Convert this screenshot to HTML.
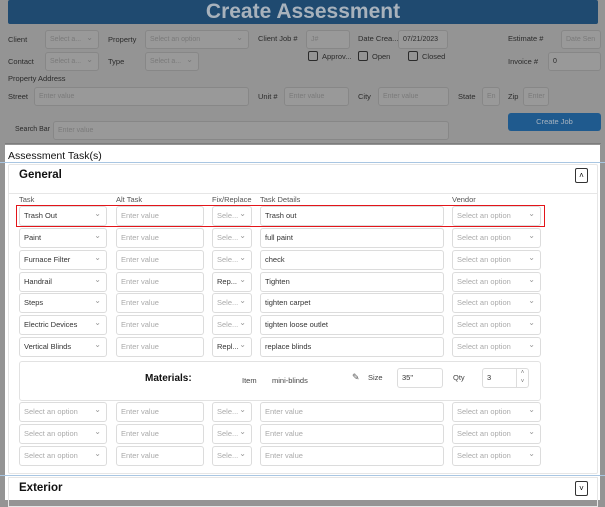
<!DOCTYPE html>
<html><head><meta charset="utf-8"><style>
*{box-sizing:border-box;margin:0;padding:0}
body{width:605px;height:500px;overflow:hidden;background:#949494;font-family:"Liberation Sans",sans-serif;position:relative}
.a{position:absolute}
.l{position:absolute;font-size:7.5px;color:#2b2b2b;white-space:nowrap}
.gi{position:absolute;height:19px;border:1px solid #878787;border-radius:3px;background:#999;font-size:7px;color:#7a7a7a;padding:0 4px;line-height:17px;white-space:nowrap;overflow:hidden}
.gi.v{color:#2b2b2b}
.gi.s:after{content:"⌄";position:absolute;right:5px;top:-2px;font-size:8px;color:#777}
.in{position:absolute;height:20px;border:1px solid #dcdcdc;border-radius:3px;background:#fff;font-size:7.5px;color:#aaa;padding:0 4px;line-height:18px;white-space:nowrap;overflow:hidden}
.in.v{color:#333}
.in.s:after{content:"⌄";position:absolute;right:5px;top:-2px;font-size:8px;color:#999}
.cb{position:absolute;width:10px;height:10px;border:1px solid #2b2b2b;border-radius:2px}
.h{position:absolute;font-size:7.5px;color:#555}
</style></head><body>
<div class="a" style="left:8px;top:0;width:590px;height:24px;background:#1f4a70;border-radius:2px;text-align:center;color:#a8b2bc;font-weight:bold;font-size:21px;line-height:23px">Create Assessment</div>

<div class="l" style="left:8px;top:35px">Client</div>
<div class="gi s" style="left:45px;top:30px;width:54px">Select a...</div>
<div class="l" style="left:108px;top:35px">Property</div>
<div class="gi s" style="left:145px;top:30px;width:104px">Select an option</div>
<div class="l" style="left:258px;top:34px">Client Job #</div>
<div class="gi" style="left:306px;top:30px;width:44px">J#</div>
<div class="l" style="left:358px;top:34px">Date Crea...</div>
<div class="gi v" style="left:398px;top:30px;width:50px">07/21/2023</div>
<div class="l" style="left:508px;top:34px">Estimate #</div>
<div class="gi" style="left:561px;top:30px;width:40px">Date Sen</div>

<div class="l" style="left:8px;top:57px">Contact</div>
<div class="gi s" style="left:45px;top:52px;width:54px">Select a...</div>
<div class="l" style="left:108px;top:57px">Type</div>
<div class="gi s" style="left:145px;top:52px;width:54px">Select a...</div>
<div class="cb" style="left:308px;top:51px"></div><div class="l" style="left:322px;top:52px">Approv...</div>
<div class="cb" style="left:358px;top:51px"></div><div class="l" style="left:372px;top:52px">Open</div>
<div class="cb" style="left:408px;top:51px"></div><div class="l" style="left:422px;top:52px">Closed</div>
<div class="l" style="left:508px;top:57px">Invoice #</div>
<div class="gi v" style="left:548px;top:52px;width:53px">0</div>

<div class="l" style="left:8px;top:74px">Property Address</div>
<div class="l" style="left:8px;top:92px">Street</div>
<div class="gi" style="left:34px;top:87px;width:215px">Enter value</div>
<div class="l" style="left:258px;top:92px">Unit #</div>
<div class="gi" style="left:284px;top:87px;width:65px">Enter value</div>
<div class="l" style="left:358px;top:92px">City</div>
<div class="gi" style="left:378px;top:87px;width:71px">Enter value</div>
<div class="l" style="left:458px;top:92px">State</div>
<div class="gi" style="left:482px;top:87px;width:18px">En</div>
<div class="l" style="left:508px;top:92px">Zip</div>
<div class="gi" style="left:523px;top:87px;width:26px">Enter</div>

<div class="a" style="left:508px;top:113px;width:93px;height:18px;background:#1f5a8e;border-radius:3px;color:#a8b4c0;font-size:7.5px;text-align:center;line-height:18px">Create Job</div>
<div class="l" style="left:15px;top:126px;font-size:7px">Search Bar</div>
<div class="gi" style="left:53px;top:121px;width:396px">Enter value</div>
<div class="a" style="left:5px;top:143px;width:596px;height:1px;background:#7d7d7d"></div>

<div class="a" style="left:5px;top:145px;width:595px;height:355px;background:#fff"></div>
<div class="a" style="left:8px;top:150px;font-size:10.5px;color:#111">Assessment Task(s)</div>
<div class="a" style="left:0;top:162px;width:605px;height:1px;background:#a9c6e2"></div>

<div class="a" style="left:8px;top:164px;width:590px;height:310px;border:1px solid #e6e6e6;border-radius:2px"></div>
<div class="a" style="left:19px;top:169px;font-size:11.5px;font-weight:bold;color:#111">General</div>
<div class="a" style="left:9px;top:193px;width:588px;height:1px;background:#e6e6e6"></div>
<div class="a" style="left:575px;top:168px;width:13px;height:15px;border:1px solid #333;border-radius:2px;font-size:8px;text-align:center;line-height:14px">˄</div>

<div class="h" style="left:19px;top:195px">Task</div>
<div class="h" style="left:116px;top:195px">Alt Task</div>
<div class="h" style="left:212px;top:195px">Fix/Replace</div>
<div class="h" style="left:260px;top:195px">Task Details</div>
<div class="h" style="left:452px;top:195px">Vendor</div>

<div id="rows"></div>
<script>
var r=[["Trash Out","Sele...","Trash out"],["Paint","Sele...","full paint"],["Furnace Filter","Sele...","check"],["Handrail","Rep...","Tighten"],["Steps","Sele...","tighten carpet"],["Electric Devices","Sele...","tighten loose outlet"],["Vertical Blinds","Repl...","replace blinds"],[null],[null],[null]];
var ys=[206,228,250,272,293,315,337,402,424,446],h="";
for(var i=0;i<10;i++){var y=ys[i],d=r[i];var e=d[0]==null;
h+='<div class="in s'+(e?'':' v')+'" style="left:19px;top:'+y+'px;width:88px">'+(e?'Select an option':d[0])+'</div>';
h+='<div class="in" style="left:116px;top:'+y+'px;width:88px">Enter value</div>';
h+='<div class="in s'+(e||d[1]=="Sele..."?'':' v')+'" style="left:212px;top:'+y+'px;width:40px">'+(e?'Sele...':d[1])+'</div>';
h+='<div class="in'+(e?'':' v')+'" style="left:260px;top:'+y+'px;width:184px">'+(e?'Enter value':d[2])+'</div>';
h+='<div class="in s" style="left:452px;top:'+y+'px;width:89px">Select an option</div>';}
document.getElementById('rows').outerHTML=h;
</script>
<div class="a" style="left:16px;top:205px;width:529px;height:22px;border:1.5px solid #e3151a"></div>

<div class="a" style="left:19px;top:361px;width:522px;height:40px;border:1px solid #e2e2e2;border-radius:3px"></div>
<div class="a" style="left:145px;top:373px;font-size:10px;font-weight:bold;color:#111">Materials:</div>
<div class="h" style="left:242px;top:376px;color:#444">Item</div>
<div class="h" style="left:272px;top:376px;color:#444">mini-blinds</div>
<div class="a" style="left:352px;top:372px;font-size:9px;color:#555">✎</div>
<div class="h" style="left:368px;top:373px;color:#444">Size</div>
<div class="in v" style="left:397px;top:368px;width:46px">35"</div>
<div class="h" style="left:453px;top:373px;color:#444">Qty</div>
<div class="in v" style="left:482px;top:368px;width:47px">3</div>
<div class="a" style="left:516px;top:369px;width:12px;height:18px;border-left:1px solid #ddd;font-size:6px;color:#777;text-align:center;line-height:9px">˄<br>˅</div>

<div class="a" style="left:0;top:475px;width:605px;height:1px;background:#a9c6e2"></div>
<div class="a" style="left:8px;top:477px;width:590px;height:30px;border:1px solid #e6e6e6"></div>
<div class="a" style="left:19px;top:482px;font-size:11.5px;font-weight:bold;color:#111">Exterior</div>
<div class="a" style="left:575px;top:481px;width:13px;height:15px;border:1px solid #333;border-radius:2px;font-size:8px;text-align:center;line-height:13px">˅</div>
</body></html>
